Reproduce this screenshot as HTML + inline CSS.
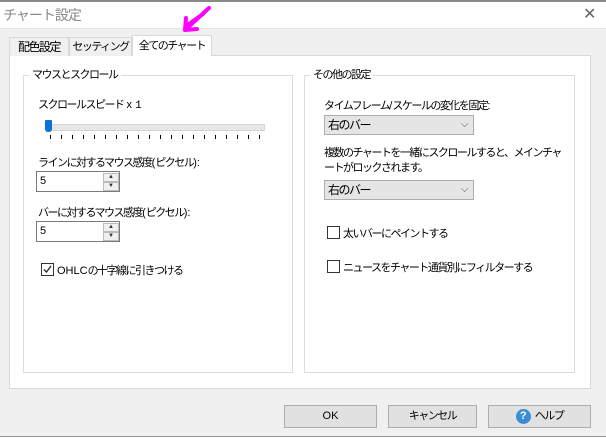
<!DOCTYPE html>
<html><head><meta charset="utf-8"><style>
*{box-sizing:border-box;margin:0;padding:0}
body{width:606px;height:440px;background:#f0f0f0;position:relative;overflow:hidden;font-family:"Liberation Sans","Noto Sans CJK JP",sans-serif;font-size:11px;letter-spacing:-1.5px;color:#000;white-space:nowrap}
.a{position:absolute}
.l{letter-spacing:0}
.title{left:0;top:0;width:606px;height:28px;background:#fff;border-top:2px solid #888}
.tab{top:37px;height:19px;border:1px solid #d9d9d9;border-bottom:none;background:#f0f0f0;text-align:center;line-height:18px}
.panel{left:9px;top:55px;width:582px;height:334px;background:#fff;border:1px solid #d9d9d9}
.gb{border:1px solid #dcdcdc}
.gl{background:#fff;padding:0 3px;line-height:14px}
.spin{width:84px;height:21px;border:1px solid #7a7a7a;background:#fff;padding-left:3px;line-height:19px;letter-spacing:0}
.spin .b{position:absolute;right:0;width:16px;height:9px;border:1px solid #bbb;background:#f0f0f0;font-size:6px;line-height:7px;text-align:center;color:#333}
.combo{width:150px;height:20px;border:1px solid #adadad;background:#e5e5e5;padding-left:3px;line-height:18px;font-size:12px}
.combo span{position:absolute;right:6px;top:0;color:#555;font-size:10px}
.cb{width:13px;height:13px;border:1px solid #333;background:#fff}
.btn{top:405px;height:23px;border:1px solid #adadad;background:#e1e1e1;text-align:center;line-height:21px}
</style></head><body>
<div class="a title"></div>
<div class="a" style="left:3px;top:5px;font-size:14px;color:#888;letter-spacing:-1px">チャート設定</div>
<div class="a" style="left:583px;top:4px;font-size:16px;color:#666">✕</div>
<div class="a" style="left:0;top:28px;width:606px;height:1px;background:#e6e6e6"></div>
<div class="a panel"></div>
<div class="a tab" style="left:9px;width:60px;font-size:12px">配色設定</div>
<div class="a tab" style="left:69px;width:63px">セッティング</div>
<div class="a tab" style="left:132px;top:35px;width:80px;height:21px;background:#fff;line-height:20px">全てのチャート</div>
<svg class="a" style="left:175px;top:0" width="50" height="36"><path d="M10 30 L34 8 M10 30 L11 18 M10 30 L22 29 M14 24 L28 14" stroke="#f0f" stroke-width="4" stroke-linecap="round" fill="none"/></svg>

<div class="a gb" style="left:23px;top:75px;width:270px;height:298px"></div>
<div class="a gl" style="left:29px;top:68px">マウスとスクロール</div>
<div class="a" style="left:38px;top:96px">スクロールスピード<span class="l"> x </span><span style="font-family:'Liberation Mono',monospace;letter-spacing:0">1</span></div>
<div class="a" style="left:46px;top:124px;width:219px;height:7px;background:#e7e7e7;border:1px solid #d6d6d6"></div>
<div class="a" style="left:45px;top:120px;width:7px;height:12px;background:#0a73d8;border-radius:1px 1px 3px 3px"></div>
<svg class="a" style="left:45px;top:135px" width="225" height="6"><g stroke="#000" stroke-width="1">
<path d="M5.5 0v4M16.5 0v4M27.5 0v4M38.5 0v4M49.5 0v4M60.5 0v4M71.5 0v4M82.5 0v4M93.5 0v4M104.5 0v4M115.5 0v4M126.5 0v4M137.5 0v4M148.5 0v4M159.5 0v4M170.5 0v4M181.5 0v4M192.5 0v4M203.5 0v4M214.5 0v4"/></g></svg>
<div class="a" style="left:38px;top:154px">ラインに対するマウス感度<span class="l">(</span>ピクセル<span class="l">):</span></div>
<div class="a spin" style="left:36px;top:171px">5<div class="b" style="top:1px">▲</div><div class="b" style="top:10px">▼</div></div>
<div class="a" style="left:38px;top:204px">バーに対するマウス感度<span class="l">(</span>ピクセル<span class="l">):</span></div>
<div class="a spin" style="left:36px;top:221px">5<div class="b" style="top:1px">▲</div><div class="b" style="top:10px">▼</div></div>
<div class="a cb" style="left:41px;top:263px"><svg width="11" height="11" style="position:absolute;left:0;top:0"><path d="M2 5.5 L4.5 8 L9 2" stroke="#222" stroke-width="1.3" fill="none"/></svg></div>
<div class="a" style="left:57px;top:262px"><span class="l">OHLC</span>の十字線に引きつける</div>

<div class="a gb" style="left:304px;top:75px;width:271px;height:298px"></div>
<div class="a gl" style="left:310px;top:68px">その他の設定</div>
<div class="a" style="left:324px;top:97px">タイムフレーム<span class="l">/</span>スケールの変化を固定<span class="l">:</span></div>
<div class="a combo" style="left:324px;top:115px">右のバー<span>⌵</span></div>
<div class="a" style="left:324px;top:146px;line-height:15px">複数のチャートを一緒にスクロールすると、メインチャ<br>ートがロックされます。</div>
<div class="a combo" style="left:324px;top:180px">右のバー<span>⌵</span></div>
<div class="a cb" style="left:327px;top:226px"></div>
<div class="a" style="left:343px;top:225px">太いバーにペイントする</div>
<div class="a cb" style="left:327px;top:260px"></div>
<div class="a" style="left:343px;top:259px">ニュースをチャート通貨別にフィルターする</div>

<div class="a btn" style="left:284px;width:93px;letter-spacing:0">OK</div>
<div class="a btn" style="left:388px;width:89px">キャンセル</div>
<div class="a btn" style="left:488px;width:103px"><span style="display:inline-block;width:15px;height:15px;border-radius:50%;background:#3a8fd4;color:#fff;font-size:11px;line-height:15px;font-weight:bold;vertical-align:middle;margin-right:4px;letter-spacing:0">?</span>ヘルプ</div>
<div class="a" style="left:0;top:436px;width:606px;height:4px;background:#fff;border-top:1px solid #999"></div>
</body></html>
